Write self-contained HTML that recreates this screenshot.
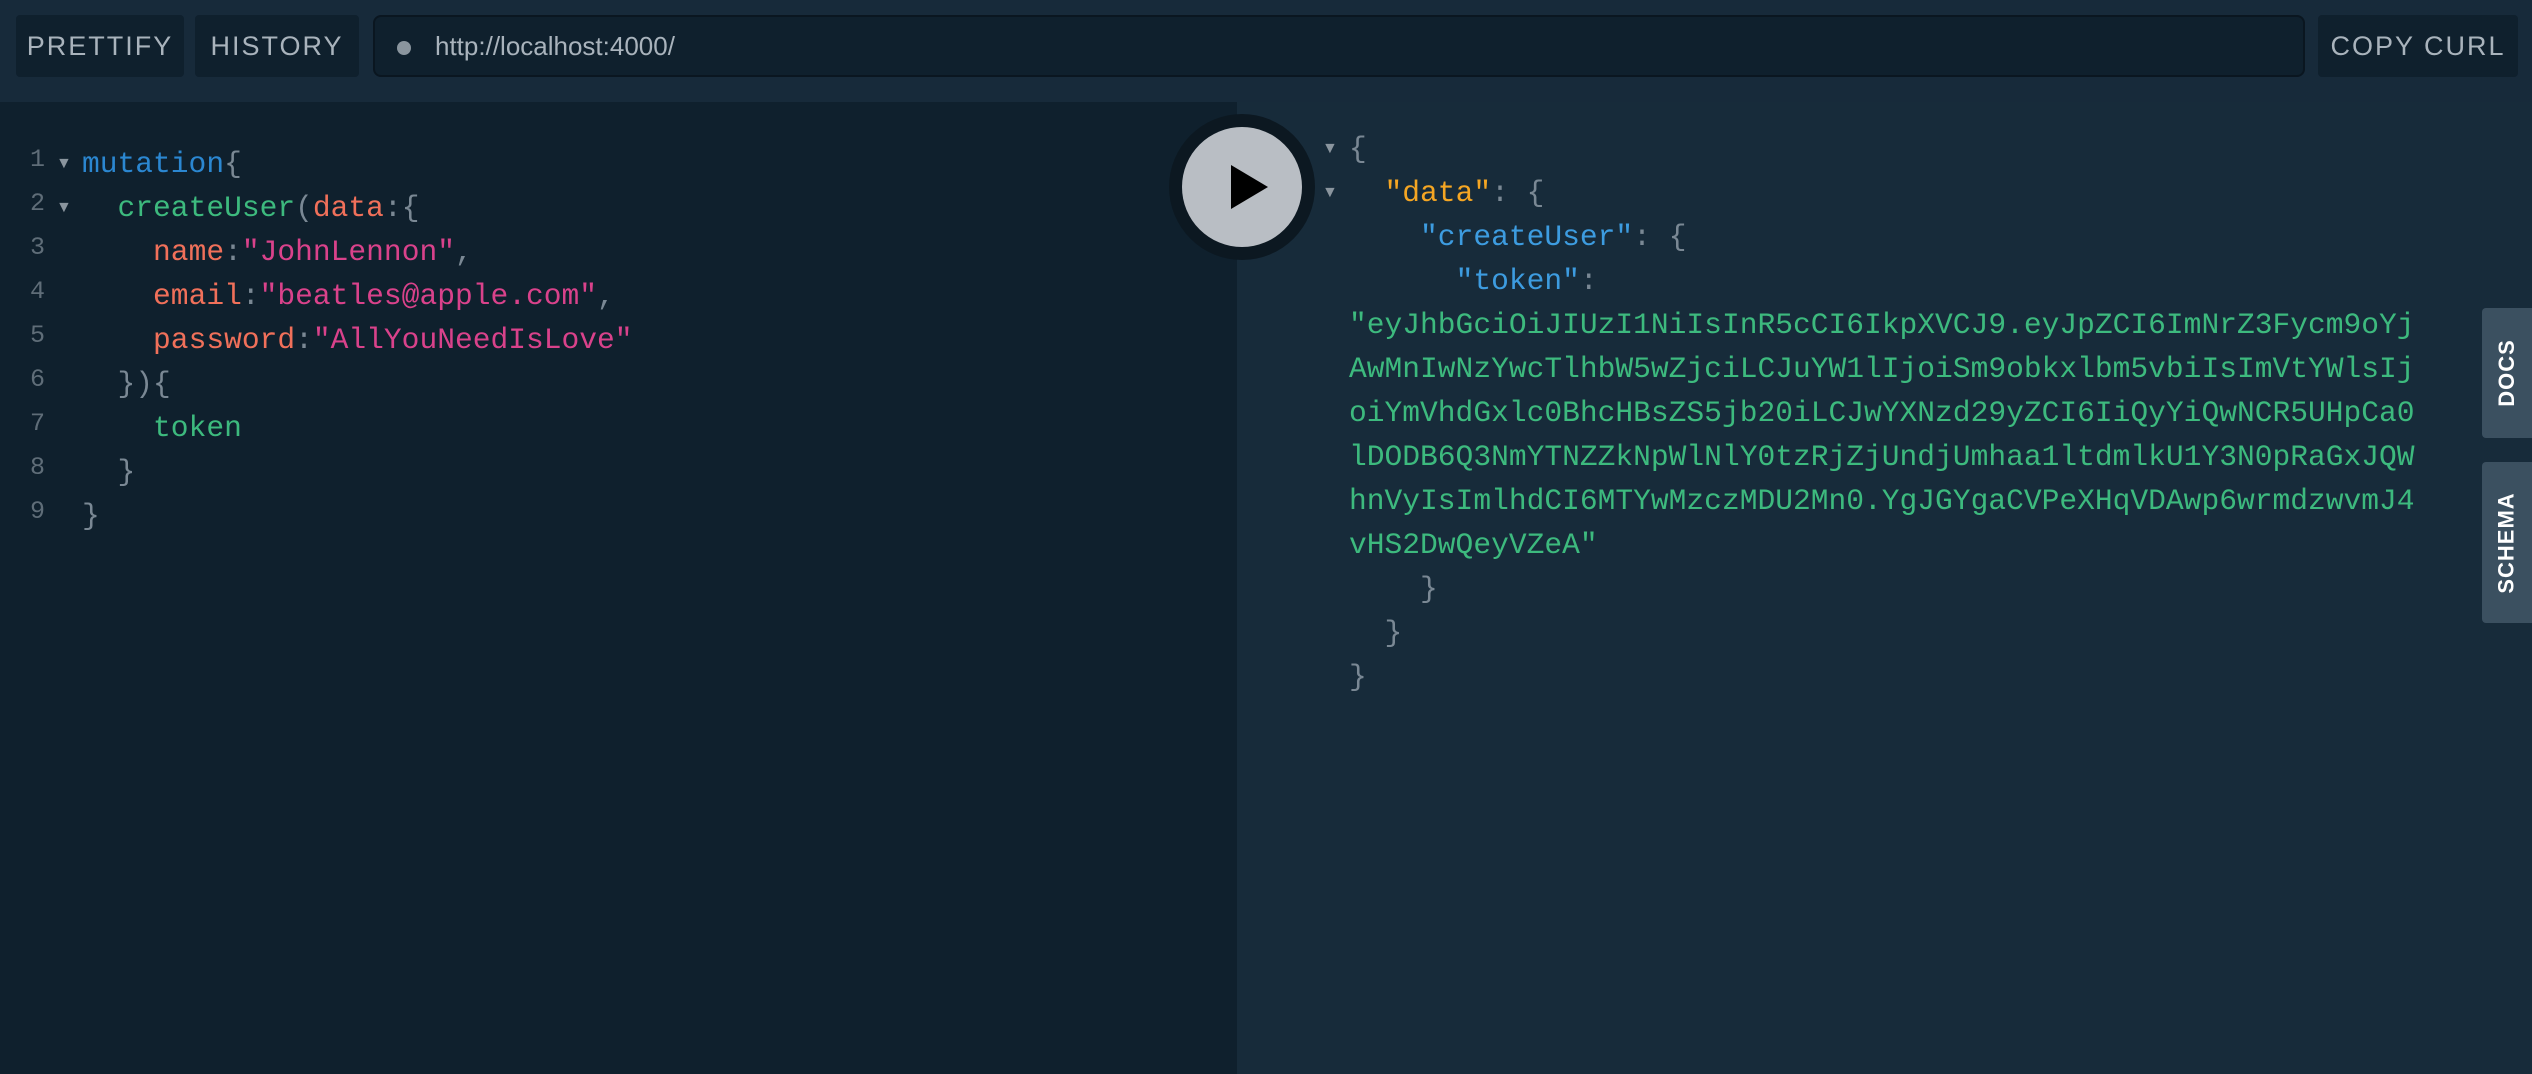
<!DOCTYPE html>
<html><head><meta charset="utf-8"><style>
*{margin:0;padding:0;box-sizing:border-box}
body{width:2532px;height:1074px;background:#172a3a;font-family:"Liberation Sans",sans-serif;overflow:hidden;position:relative}
.btn{position:absolute;top:15px;height:62px;background:#0f202d;border-radius:4px;color:#a9b3bc;font-size:27px;letter-spacing:2px;display:flex;align-items:center;justify-content:center}
.url{position:absolute;left:373px;top:15px;width:1932px;height:62px;background:#0f202d;border:2px solid #0a1620;border-radius:8px;color:#a9b3bc;font-size:26px;display:flex;align-items:center;padding-left:60px}
.url:before{content:"";position:absolute;left:22px;top:24px;width:14px;height:14px;border-radius:50%;background:#8a959e}
.left{position:absolute;left:0;top:102px;width:1237px;height:972px;background:#0f202d}
.right{position:absolute;left:1237px;top:102px;width:1295px;height:972px;background:#172b3a}
.code{position:absolute;font-family:"Liberation Mono",monospace;font-size:29.6px;line-height:44px;white-space:pre;color:#7a8894}
.ln{position:absolute;left:30px;font-family:"Liberation Mono",monospace;font-size:25px;color:#5f6d78}
.ar{position:absolute;color:#8a959e;font-size:16px}
.k{color:#2b87d1}.g{color:#3dba7e}.o{color:#f0705a}.p{color:#d9428b}.y{color:#f5a623}.b{color:#3d9ce0}
.play{position:absolute;left:1169px;top:114px;width:146px;height:146px;border-radius:50%;background:#0c1821}
.play div{position:absolute;left:13px;top:13px;width:120px;height:120px;border-radius:50%;background:#b9bec4}
.play div:after{content:"";position:absolute;left:49px;top:38px;border-left:37px solid #000;border-top:22px solid transparent;border-bottom:22px solid transparent}
.tab{position:absolute;left:2482px;width:50px;background:#3b5060;border-radius:4px 0 0 4px;color:#fff;font-size:22px;font-weight:bold;letter-spacing:1px;display:flex;align-items:center;justify-content:center}
.tab span{transform:rotate(-90deg);white-space:nowrap}
</style></head><body>
<div class="btn" style="left:16px;width:168px">PRETTIFY</div>
<div class="btn" style="left:195px;width:164px">HISTORY</div>
<div class="url">http://localhost:4000/</div>
<div class="btn" style="left:2318px;width:200px">COPY CURL</div>
<div class="left"></div><div class="right"></div>
<div class="ln" style="top:145px">1</div><div class="ln" style="top:189px">2</div><div class="ln" style="top:233px">3</div><div class="ln" style="top:277px">4</div><div class="ln" style="top:321px">5</div><div class="ln" style="top:365px">6</div><div class="ln" style="top:409px">7</div><div class="ln" style="top:453px">8</div><div class="ln" style="top:497px">9</div>
<div class="ar" style="left:56px;top:155px">▼</div><div class="ar" style="left:56px;top:199px">▼</div>
<div class="code" style="left:82px;top:142px"><span class="k">mutation</span>{
  <span class="g">createUser</span>(<span class="o">data</span>:{
    <span class="o">name</span>:<span class="p">"JohnLennon"</span>,
    <span class="o">email</span>:<span class="p">"beatles@apple.com"</span>,
    <span class="o">password</span>:<span class="p">"AllYouNeedIsLove"</span>
  }){
    <span class="g">token</span>
  }
}</div>
<div class="play"><div></div></div>
<div class="ar" style="left:1322px;top:140px">▼</div><div class="ar" style="left:1322px;top:184px">▼</div>
<div class="code" style="left:1349px;top:127px">{
  <span class="y">"data"</span>: {
    <span class="b">"createUser"</span>: {
      <span class="b">"token"</span>:
<span class="g">"eyJhbGciOiJIUzI1NiIsInR5cCI6IkpXVCJ9.eyJpZCI6ImNrZ3Fycm9oYj
AwMnIwNzYwcTlhbW5wZjciLCJuYW1lIjoiSm9obkxlbm5vbiIsImVtYWlsIj
oiYmVhdGxlc0BhcHBsZS5jb20iLCJwYXNzd29yZCI6IiQyYiQwNCR5UHpCa0
lDODB6Q3NmYTNZZkNpWlNlY0tzRjZjUndjUmhaa1ltdmlkU1Y3N0pRaGxJQW
hnVyIsImlhdCI6MTYwMzczMDU2Mn0.YgJGYgaCVPeXHqVDAwp6wrmdzwvmJ4
vHS2DwQeyVZeA"</span>
    }
  }
}</div>
<div class="tab" style="top:308px;height:130px"><span>DOCS</span></div>
<div class="tab" style="top:462px;height:161px"><span>SCHEMA</span></div>
</body></html>
